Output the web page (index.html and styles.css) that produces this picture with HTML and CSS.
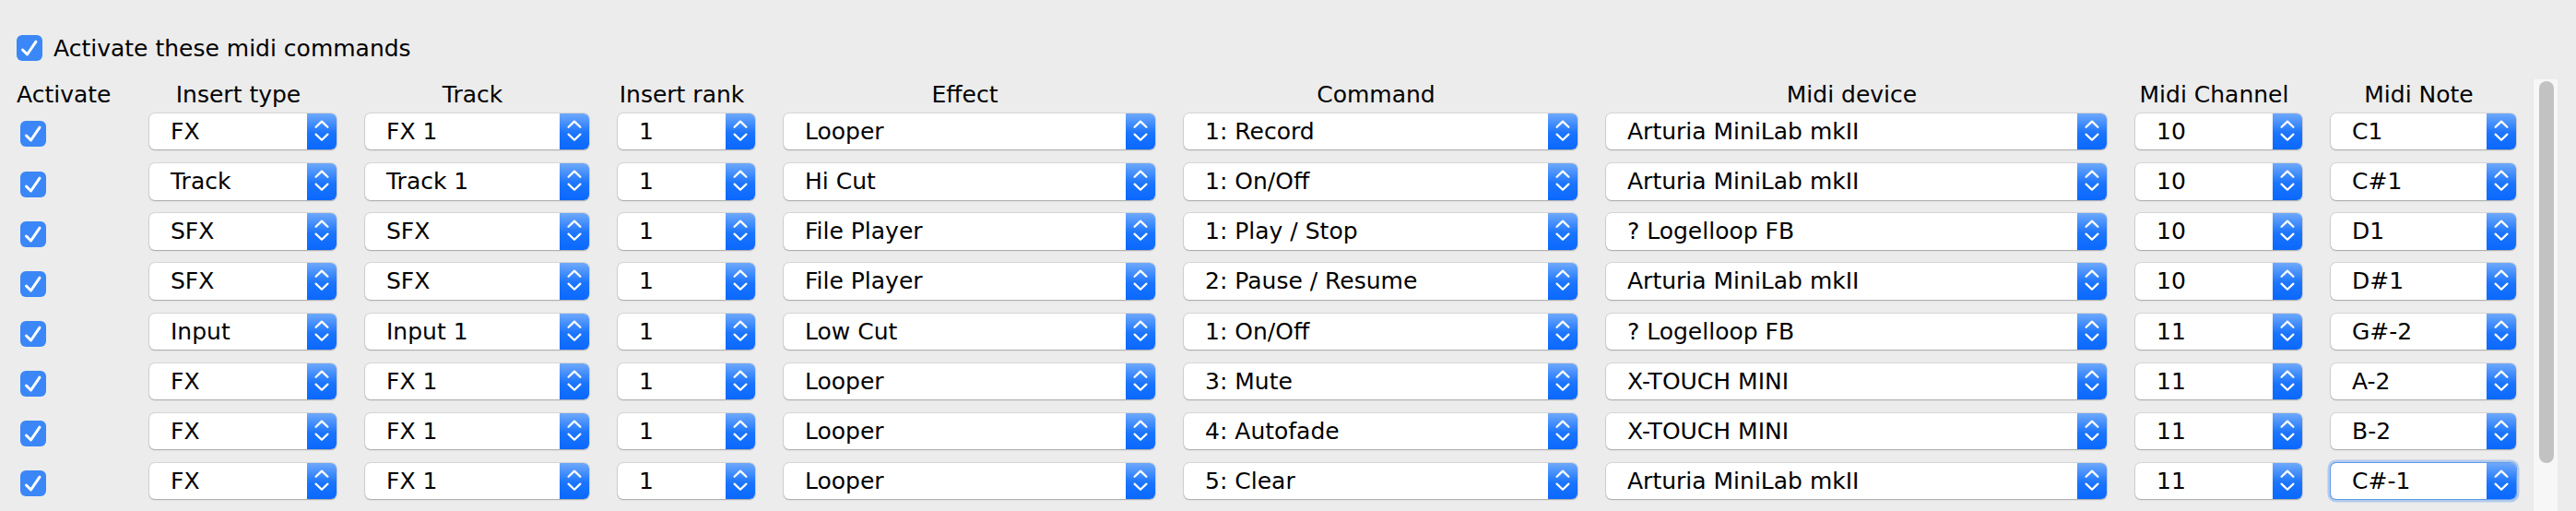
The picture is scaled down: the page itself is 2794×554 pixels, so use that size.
FILE: index.html
```html
<!DOCTYPE html>
<html lang="en">
<head>
<meta charset="utf-8">
<title>Midi commands</title>
<link rel="stylesheet" href="styles.css">
</head>
<body>
<svg class="defs" width="0" height="0" aria-hidden="true">
  <symbol id="updown" viewBox="0 0 32 40">
    <path d="M9.5 15 L16 8.8 L22.5 15 M9.5 23 L16 29.2 L22.5 23" fill="none" stroke="#fff" stroke-width="2.3" stroke-linecap="round" stroke-linejoin="round"/>
  </symbol>
  <symbol id="tick" viewBox="0 0 28 28">
    <path d="M6.5 16 L11.5 21 L21 7.2" fill="none" stroke="#fff" stroke-width="3" stroke-linecap="round" stroke-linejoin="round"/>
  </symbol>
</svg>
<div class="panel">
  <div class="master">
    <svg class="check"><use href="#tick"/></svg>
    <span>Activate these midi commands</span>
  </div>
  <div class="pane">
    <div class="table">
      <div class="cols thead">
        <div class="th th-left">Activate</div>
        <div class="th">Insert type</div>
        <div class="th">Track</div>
        <div class="th">Insert rank</div>
        <div class="th">Effect</div>
        <div class="th">Command</div>
        <div class="th">Midi device</div>
        <div class="th">Midi Channel</div>
        <div class="th">Midi Note</div>
      </div>
      <div class="cols tbody">
        <!-- row 1 -->
        <svg class="check row-check"><use href="#tick"/></svg>
        <div class="select"><span class="value">FX</span><svg class="arrows"><use href="#updown"/></svg></div>
        <div class="select"><span class="value">FX 1</span><svg class="arrows"><use href="#updown"/></svg></div>
        <div class="select"><span class="value">1</span><svg class="arrows"><use href="#updown"/></svg></div>
        <div class="select"><span class="value">Looper</span><svg class="arrows"><use href="#updown"/></svg></div>
        <div class="select"><span class="value">1: Record</span><svg class="arrows"><use href="#updown"/></svg></div>
        <div class="select"><span class="value">Arturia MiniLab mkII</span><svg class="arrows"><use href="#updown"/></svg></div>
        <div class="select"><span class="value">10</span><svg class="arrows"><use href="#updown"/></svg></div>
        <div class="select"><span class="value">C1</span><svg class="arrows"><use href="#updown"/></svg></div>
        <!-- row 2 -->
        <svg class="check row-check"><use href="#tick"/></svg>
        <div class="select"><span class="value">Track</span><svg class="arrows"><use href="#updown"/></svg></div>
        <div class="select"><span class="value">Track 1</span><svg class="arrows"><use href="#updown"/></svg></div>
        <div class="select"><span class="value">1</span><svg class="arrows"><use href="#updown"/></svg></div>
        <div class="select"><span class="value">Hi Cut</span><svg class="arrows"><use href="#updown"/></svg></div>
        <div class="select"><span class="value">1: On/Off</span><svg class="arrows"><use href="#updown"/></svg></div>
        <div class="select"><span class="value">Arturia MiniLab mkII</span><svg class="arrows"><use href="#updown"/></svg></div>
        <div class="select"><span class="value">10</span><svg class="arrows"><use href="#updown"/></svg></div>
        <div class="select"><span class="value">C#1</span><svg class="arrows"><use href="#updown"/></svg></div>
        <!-- row 3 -->
        <svg class="check row-check"><use href="#tick"/></svg>
        <div class="select"><span class="value">SFX</span><svg class="arrows"><use href="#updown"/></svg></div>
        <div class="select"><span class="value">SFX</span><svg class="arrows"><use href="#updown"/></svg></div>
        <div class="select"><span class="value">1</span><svg class="arrows"><use href="#updown"/></svg></div>
        <div class="select"><span class="value">File Player</span><svg class="arrows"><use href="#updown"/></svg></div>
        <div class="select"><span class="value">1: Play / Stop</span><svg class="arrows"><use href="#updown"/></svg></div>
        <div class="select"><span class="value">? Logelloop FB</span><svg class="arrows"><use href="#updown"/></svg></div>
        <div class="select"><span class="value">10</span><svg class="arrows"><use href="#updown"/></svg></div>
        <div class="select"><span class="value">D1</span><svg class="arrows"><use href="#updown"/></svg></div>
        <!-- row 4 -->
        <svg class="check row-check"><use href="#tick"/></svg>
        <div class="select"><span class="value">SFX</span><svg class="arrows"><use href="#updown"/></svg></div>
        <div class="select"><span class="value">SFX</span><svg class="arrows"><use href="#updown"/></svg></div>
        <div class="select"><span class="value">1</span><svg class="arrows"><use href="#updown"/></svg></div>
        <div class="select"><span class="value">File Player</span><svg class="arrows"><use href="#updown"/></svg></div>
        <div class="select"><span class="value">2: Pause / Resume</span><svg class="arrows"><use href="#updown"/></svg></div>
        <div class="select"><span class="value">Arturia MiniLab mkII</span><svg class="arrows"><use href="#updown"/></svg></div>
        <div class="select"><span class="value">10</span><svg class="arrows"><use href="#updown"/></svg></div>
        <div class="select"><span class="value">D#1</span><svg class="arrows"><use href="#updown"/></svg></div>
        <!-- row 5 -->
        <svg class="check row-check"><use href="#tick"/></svg>
        <div class="select"><span class="value">Input</span><svg class="arrows"><use href="#updown"/></svg></div>
        <div class="select"><span class="value">Input 1</span><svg class="arrows"><use href="#updown"/></svg></div>
        <div class="select"><span class="value">1</span><svg class="arrows"><use href="#updown"/></svg></div>
        <div class="select"><span class="value">Low Cut</span><svg class="arrows"><use href="#updown"/></svg></div>
        <div class="select"><span class="value">1: On/Off</span><svg class="arrows"><use href="#updown"/></svg></div>
        <div class="select"><span class="value">? Logelloop FB</span><svg class="arrows"><use href="#updown"/></svg></div>
        <div class="select"><span class="value">11</span><svg class="arrows"><use href="#updown"/></svg></div>
        <div class="select"><span class="value">G#-2</span><svg class="arrows"><use href="#updown"/></svg></div>
        <!-- row 6 -->
        <svg class="check row-check"><use href="#tick"/></svg>
        <div class="select"><span class="value">FX</span><svg class="arrows"><use href="#updown"/></svg></div>
        <div class="select"><span class="value">FX 1</span><svg class="arrows"><use href="#updown"/></svg></div>
        <div class="select"><span class="value">1</span><svg class="arrows"><use href="#updown"/></svg></div>
        <div class="select"><span class="value">Looper</span><svg class="arrows"><use href="#updown"/></svg></div>
        <div class="select"><span class="value">3: Mute</span><svg class="arrows"><use href="#updown"/></svg></div>
        <div class="select"><span class="value">X-TOUCH MINI</span><svg class="arrows"><use href="#updown"/></svg></div>
        <div class="select"><span class="value">11</span><svg class="arrows"><use href="#updown"/></svg></div>
        <div class="select"><span class="value">A-2</span><svg class="arrows"><use href="#updown"/></svg></div>
        <!-- row 7 -->
        <svg class="check row-check"><use href="#tick"/></svg>
        <div class="select"><span class="value">FX</span><svg class="arrows"><use href="#updown"/></svg></div>
        <div class="select"><span class="value">FX 1</span><svg class="arrows"><use href="#updown"/></svg></div>
        <div class="select"><span class="value">1</span><svg class="arrows"><use href="#updown"/></svg></div>
        <div class="select"><span class="value">Looper</span><svg class="arrows"><use href="#updown"/></svg></div>
        <div class="select"><span class="value">4: Autofade</span><svg class="arrows"><use href="#updown"/></svg></div>
        <div class="select"><span class="value">X-TOUCH MINI</span><svg class="arrows"><use href="#updown"/></svg></div>
        <div class="select"><span class="value">11</span><svg class="arrows"><use href="#updown"/></svg></div>
        <div class="select"><span class="value">B-2</span><svg class="arrows"><use href="#updown"/></svg></div>
        <!-- row 8 -->
        <svg class="check row-check"><use href="#tick"/></svg>
        <div class="select"><span class="value">FX</span><svg class="arrows"><use href="#updown"/></svg></div>
        <div class="select"><span class="value">FX 1</span><svg class="arrows"><use href="#updown"/></svg></div>
        <div class="select"><span class="value">1</span><svg class="arrows"><use href="#updown"/></svg></div>
        <div class="select"><span class="value">Looper</span><svg class="arrows"><use href="#updown"/></svg></div>
        <div class="select"><span class="value">5: Clear</span><svg class="arrows"><use href="#updown"/></svg></div>
        <div class="select"><span class="value">Arturia MiniLab mkII</span><svg class="arrows"><use href="#updown"/></svg></div>
        <div class="select"><span class="value">11</span><svg class="arrows"><use href="#updown"/></svg></div>
        <div class="select focus"><span class="value">C#-1</span><svg class="arrows"><use href="#updown"/></svg></div>
      </div>
    </div>
    <div class="scrollbar"><div class="thumb"></div></div>
  </div>
</div>
</body>
</html>
```
FILE: styles.css
```css
* { box-sizing: border-box; }

html, body {
  margin: 0;
  height: 100%;
}

body {
  background: #ececec;
  font-family: "DejaVu Sans", "Noto Sans", sans-serif;
  font-size: 25px;
  color: #000;
  overflow: hidden;
}

.defs {
  position: absolute;
  width: 0;
  height: 0;
  overflow: hidden;
}

.panel {
  height: 100%;
  padding: 38px 20px 0 18px;
  display: flex;
  flex-direction: column;
}

.master {
  display: flex;
  align-items: flex-start;
  gap: 12px;
  line-height: 30px;
  white-space: nowrap;
}

.check {
  display: block;
  flex: none;
  width: 28px;
  height: 28px;
  border-radius: 6px;
  background: #3b87f7;
}

.pane {
  margin-top: 18px;
  flex: 1;
  min-height: 0;
  display: flex;
}

.table {
  flex: none;
  padding-top: 2px;
}

.cols {
  display: grid;
  grid-template-columns: 113px 203px 243px 149px 403px 427px 543px 181px 201px;
  column-gap: 31px;
}

.thead {
  height: 30px;
  line-height: 30px;
  margin-bottom: 5px;
}

.th {
  text-align: center;
  padding-right: 10px;
  white-space: nowrap;
}

.th-left {
  text-align: left;
  padding-right: 0;
}

.tbody {
  grid-auto-rows: 39.4px;
  row-gap: 14.75px;
}

.row-check {
  margin: 8.4px 0 0 4px;
}

.select {
  display: flex;
  background: #fff;
  border-radius: 6px;
  line-height: 39.4px;
  box-shadow: 0 0 0 1px rgba(0, 0, 0, 0.09), 0 1px 1.5px rgba(0, 0, 0, 0.22);
}

.value {
  flex: 1;
  min-width: 0;
  padding-left: 23px;
  white-space: nowrap;
  overflow: hidden;
}

.arrows {
  display: block;
  flex: none;
  width: 32px;
  height: 100%;
  border-radius: 0 6px 6px 0;
  background: linear-gradient(#6fa9fb, #1a74fd 55%, #0a68fe);
}

.focus {
  box-shadow: 0 0 0 1px #5f99e8, 0 0 0 3.5px rgba(120, 168, 236, 0.5);
}

.scrollbar {
  flex: none;
  width: 27px;
  margin-left: 18px;
  background: #f7f7f7;
  border-left: 1px solid #e7e7e7;
  padding: 2px 0 0 6px;
}

.thumb {
  width: 16px;
  height: 414px;
  border-radius: 8px;
  background: #c2c2c2;
}
```
